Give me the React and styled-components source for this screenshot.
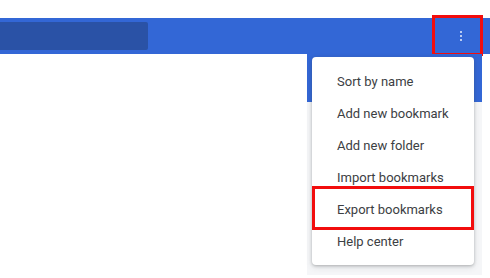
import React from 'react';
import styled, { createGlobalStyle } from 'styled-components';

const GlobalStyle = createGlobalStyle`
  html, body { margin: 0; padding: 0; background: #fff; }
  body { font-family: Roboto, "Liberation Sans", Arial, sans-serif; }
`;

const Page = styled.div`
  position: relative;
  width: 490px;
  height: 278px;
  padding-top: 18px;
  box-sizing: border-box;
  overflow: hidden;
`;

const Toolbar = styled.div`
  display: flex;
  align-items: center;
  justify-content: space-between;
  height: 36px;
  background: #3367d6;
`;

const SearchBox = styled.div`
  width: 148px;
  height: 28px;
  background: #2a52a6;
  border-radius: 0 2px 2px 0;
`;

const MoreButton = styled.div`
  position: relative;
  display: flex;
  flex-direction: column;
  align-items: center;
  justify-content: center;
  gap: 2px;
  width: 51px;
  height: 100%;
  margin-right: 7px;
  padding-left: 6px;
  box-sizing: border-box;
`;

const Dot = styled.span`
  width: 2px;
  height: 2px;
  background: #e8eefb;
  border-radius: 1px;
`;

const Highlight = styled.div`
  position: absolute;
  top: ${p => p.$top}px;
  bottom: ${p => p.$bottom}px;
  left: 0;
  right: 0;
  border: 3px solid #f20d0d;
  pointer-events: none;
`;

const Backdrop = styled.div`
  position: absolute;
  top: 54px;
  left: 307px;
  width: 175px;
  height: 221px;
  padding: 3px 0 0 5px;
  box-sizing: border-box;
  background: linear-gradient(#3367d6 0 48px, #f5f6f8 48px);
`;

const Menu = styled.ul`
  list-style: none;
  margin: 0;
  padding: 8px 0;
  width: 162px;
  background: #fff;
  border-radius: 4px;
  box-shadow: 0 1px 3px rgba(60, 64, 67, 0.3), 0 2px 6px rgba(60, 64, 67, 0.15);
`;

const Item = styled.li`
  position: relative;
  display: flex;
  align-items: center;
  height: 32px;
  padding-left: 25px;
  font-size: 13px;
  color: #3c4043;
  white-space: nowrap;
`;

const items = [
  'Sort by name',
  'Add new bookmark',
  'Add new folder',
  'Import bookmarks',
  'Export bookmarks',
  'Help center',
];

const App = () => {
  return (
    <>
      <GlobalStyle />
      <Page>
        <Toolbar>
          <SearchBox />
          <MoreButton>
            <Dot />
            <Dot />
            <Dot />
            <Highlight $top={-3} $bottom={-2} />
          </MoreButton>
        </Toolbar>
        <Backdrop>
          <Menu>
            {items.map(label => (
              <Item key={label}>
                {label}
                {label === 'Export bookmarks' && <Highlight $top={-7} $bottom={-5} />}
              </Item>
            ))}
          </Menu>
        </Backdrop>
      </Page>
    </>
  );
};

export default App;
